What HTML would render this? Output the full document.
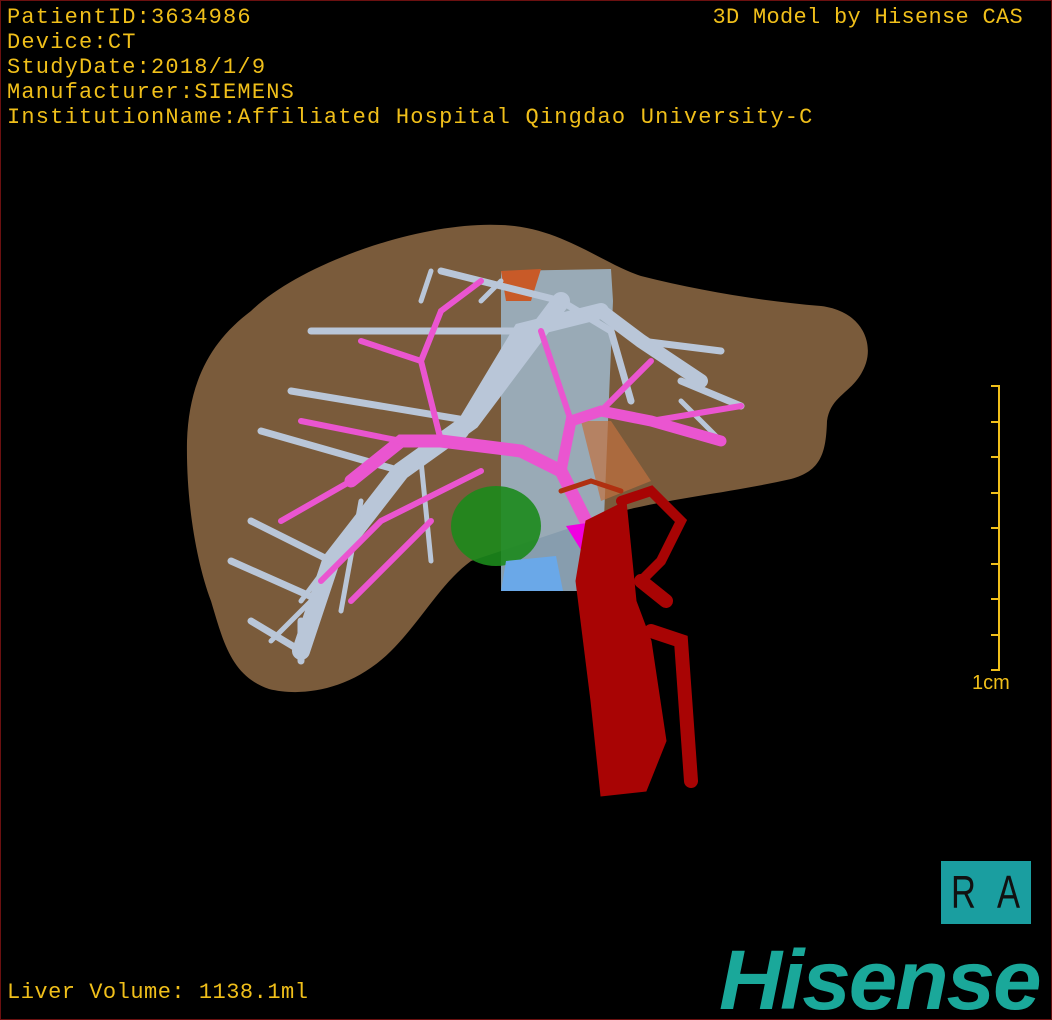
<!DOCTYPE html>
<html><head><meta charset="utf-8"><style>
html,body{margin:0;padding:0;background:#000;}
#w{position:relative;width:1050px;height:1018px;border:1px solid #6b1010;background:#000;overflow:hidden;}
.t{position:absolute;left:6px;color:#f0bf1a;font-family:"Liberation Mono","DejaVu Sans Mono",monospace;font-size:22px;line-height:25px;white-space:pre;letter-spacing:1.2px;}
.ra{position:absolute;top:0;color:#111;font:46px/63px 'Liberation Sans',sans-serif;transform:scaleX(0.75);transform-origin:left top}
</style></head><body><div id="w">
<svg width="1050" height="1018" style="position:absolute;left:0;top:0">
<path d="M250,310 C300,262 420,220 500,224 C560,226 600,262 640,275 C700,290 760,300 820,305 C860,310 872,340 865,362 C855,392 830,392 826,420 C825,452 820,470 790,478 C720,494 640,500 590,520 L470,560 C440,582 420,620 390,650 C350,690 300,696 268,688 C230,675 222,640 210,600 C195,560 185,500 186,440 C188,380 210,340 250,310 Z" fill="#7a5b3b"/>
<path d="M500,270 L610,268 L612,300 L600,590 L500,590 Z" fill="#9fb8cc" opacity="0.85"/>
<path d="M500,270 L540,268 L530,300 L505,300 Z" fill="#c85a28"/>
<path d="M580,420 L610,420 L650,480 L600,500 Z" fill="#c07040" opacity="0.7"/>
<g stroke="#b9c6d8" stroke-linecap="round" fill="none">
<path d="M300,650 L330,560 L400,470 L470,420 L560,300" stroke-width="18"/>
<path d="M460,430 L520,330 L600,310" stroke-width="16"/>
<path d="M600,310 L640,340 L700,380" stroke-width="14"/>
<path d="M330,560 L250,520 M400,470 L260,430 M470,420 L290,390 M520,330 L310,330 M560,300 L440,270 M320,600 L230,560 M300,650 L250,620 M640,340 L720,350 M680,380 L740,405 M560,300 L610,330 L630,400 M300,620 L300,660" stroke-width="7"/>
<path d="M420,460 L430,560 M360,500 L340,610 M480,300 L500,280 M430,270 L420,300 M330,580 L270,640 M360,520 L300,600 M680,400 L720,440" stroke-width="5"/>
</g>
<g stroke="#ea55d0" stroke-linecap="round" fill="none">
<path d="M600,550 L560,470 L520,450 L440,440 L400,440 L350,480" stroke-width="13"/>
<path d="M560,470 L570,420 L600,410 L650,420 L720,440" stroke-width="11"/>
<path d="M440,440 L420,360 L440,310 L480,280 M420,360 L360,340 M400,440 L300,420 M480,470 L380,520 L320,580 M430,520 L350,600 M570,420 L540,330 M650,420 L740,405 M600,410 L650,360 M350,480 L280,520" stroke-width="6"/>
</g>
<path d="M565,525 L600,520 L615,560 L590,565 Z" fill="#f000e0"/>
<ellipse cx="495" cy="525" rx="45" ry="40" fill="#1c8a1c" opacity="0.9"/>
<path d="M505,560 L555,555 L562,590 L500,590 Z" fill="#6aa8e8"/>
<g fill="#a80404" stroke="#a80404" stroke-linecap="round">
<path d="M585,520 L625,500 L635,600 L650,640 L665,740 L645,790 L600,795 L590,700 L575,580 Z"/>
<path d="M650,630 L680,640 L690,780" fill="none" stroke-width="14"/>
<path d="M620,500 L650,490 L680,520 L660,560 L640,580" fill="none" stroke-width="10"/>
<path d="M640,580 L665,600" fill="none" stroke-width="14"/>
<path d="M560,490 L590,480 L620,490" fill="none" stroke="#b03010" stroke-width="5"/>
</g>
<g stroke="#f0bf1a" stroke-width="2">
<line x1="998" y1="384" x2="998" y2="670"/>
<line x1="990" y1="385" x2="998" y2="385"/><line x1="990" y1="421" x2="998" y2="421"/><line x1="990" y1="456" x2="998" y2="456"/><line x1="990" y1="492" x2="998" y2="492"/><line x1="990" y1="527" x2="998" y2="527"/><line x1="990" y1="563" x2="998" y2="563"/><line x1="990" y1="598" x2="998" y2="598"/><line x1="990" y1="634" x2="998" y2="634"/><line x1="990" y1="669" x2="998" y2="669"/>
</g>
</svg>
<div class="t" style="top:4px">PatientID:3634986
Device:CT
StudyDate:2018/1/9
Manufacturer:SIEMENS
InstitutionName:Affiliated Hospital Qingdao University-C</div>
<div class="t" style="top:4px;left:auto;right:28px;letter-spacing:0.3px">3D Model by Hisense CAS</div>
<div class="t" style="top:670px;left:971px;font-family:'Liberation Sans',sans-serif;font-size:20px;letter-spacing:0">1cm</div>
<div class="t" style="top:979px;letter-spacing:0.5px">Liver Volume: 1138.1ml</div>
<div style="position:absolute;left:940px;top:860px;width:90px;height:63px;background:#1a9ea0;overflow:hidden">
<span class="ra" style="left:10px">R</span><span class="ra" style="left:56px">A</span></div>
<div style="position:absolute;left:718px;top:934px;color:#1aa89a;font:italic bold 84px/90px 'Liberation Sans',sans-serif;letter-spacing:-2px;transform:scaleX(1.04);transform-origin:left top">Hisense</div>
</div></body></html>
